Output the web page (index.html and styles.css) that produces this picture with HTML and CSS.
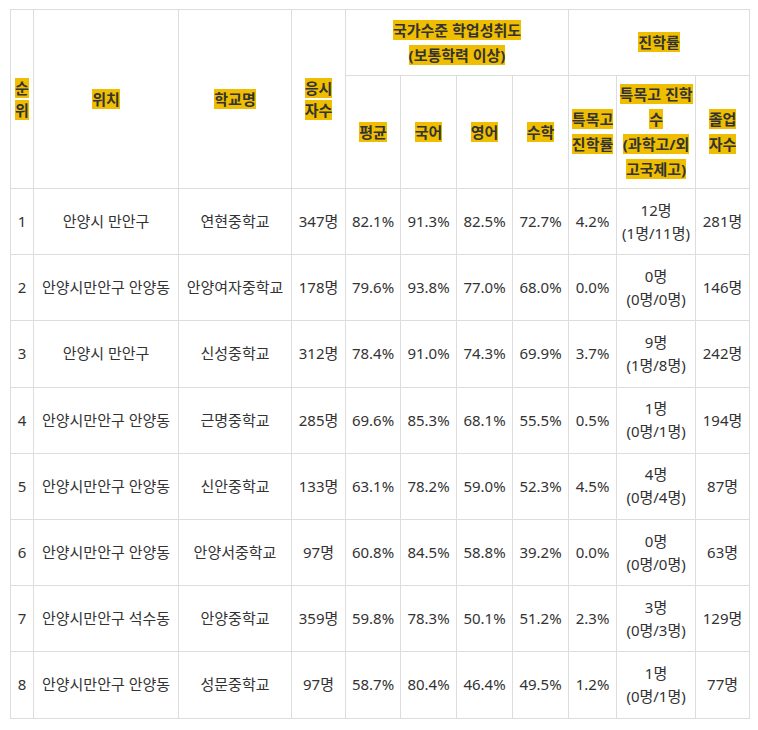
FILE: index.html
```html
<!DOCTYPE html>
<html lang="ko">
<head>
<meta charset="utf-8">
<link rel="stylesheet" href="styles.css">
</head>
<body>
<table class="rank">
  <colgroup>
    <col class="c-rank"><col class="c-loc"><col class="c-school"><col class="c-num">
    <col class="c-pct"><col class="c-pct2"><col class="c-pct2"><col class="c-pct2">
    <col class="c-rate"><col class="c-count"><col class="c-grad">
  </colgroup>
  <thead>
    <tr class="h1">
      <th rowspan="2" class="compact"><span class="hl">순</span><br><span class="hl">위</span></th>
      <th rowspan="2"><span class="hl">위치</span></th>
      <th rowspan="2"><span class="hl">학교명</span></th>
      <th rowspan="2" class="compact"><span class="hl">응시</span><br><span class="hl">자수</span></th>
      <th colspan="4"><span class="hl">국가수준 학업성취도</span><br><span class="hl">(보통학력 이상)</span></th>
      <th colspan="3"><span class="hl">진학률</span></th>
    </tr>
    <tr class="h2">
      <th><span class="hl">평균</span></th>
      <th><span class="hl">국어</span></th>
      <th><span class="hl">영어</span></th>
      <th><span class="hl">수학</span></th>
      <th class="tight"><span class="hl">특목고</span><br><span class="hl">진학률</span></th>
      <th><span class="hl">특목고 진학</span><br><span class="hl">수</span><br><span class="hl">(과학고/외</span><br><span class="hl">고국제고)</span></th>
      <th><span class="hl">졸업</span><br><span class="hl">자수</span></th>
    </tr>
  </thead>
  <tbody>
    <tr><td>1</td><td>안양시 만안구</td><td>연현중학교</td><td>347명</td><td>82.1%</td><td>91.3%</td><td>82.5%</td><td>72.7%</td><td>4.2%</td><td>12명<br>(1명/11명)</td><td>281명</td></tr>
    <tr><td>2</td><td>안양시만안구 안양동</td><td>안양여자중학교</td><td>178명</td><td>79.6%</td><td>93.8%</td><td>77.0%</td><td>68.0%</td><td>0.0%</td><td>0명<br>(0명/0명)</td><td>146명</td></tr>
    <tr><td>3</td><td>안양시 만안구</td><td>신성중학교</td><td>312명</td><td>78.4%</td><td>91.0%</td><td>74.3%</td><td>69.9%</td><td>3.7%</td><td>9명<br>(1명/8명)</td><td>242명</td></tr>
    <tr><td>4</td><td>안양시만안구 안양동</td><td>근명중학교</td><td>285명</td><td>69.6%</td><td>85.3%</td><td>68.1%</td><td>55.5%</td><td>0.5%</td><td>1명<br>(0명/1명)</td><td>194명</td></tr>
    <tr><td>5</td><td>안양시만안구 안양동</td><td>신안중학교</td><td>133명</td><td>63.1%</td><td>78.2%</td><td>59.0%</td><td>52.3%</td><td>4.5%</td><td>4명<br>(0명/4명)</td><td>87명</td></tr>
    <tr><td>6</td><td>안양시만안구 안양동</td><td>안양서중학교</td><td>97명</td><td>60.8%</td><td>84.5%</td><td>58.8%</td><td>39.2%</td><td>0.0%</td><td>0명<br>(0명/0명)</td><td>63명</td></tr>
    <tr><td>7</td><td>안양시만안구 석수동</td><td>안양중학교</td><td>359명</td><td>59.8%</td><td>78.3%</td><td>50.1%</td><td>51.2%</td><td>2.3%</td><td>3명<br>(0명/3명)</td><td>129명</td></tr>
    <tr><td>8</td><td>안양시만안구 안양동</td><td>성문중학교</td><td>97명</td><td>58.7%</td><td>80.4%</td><td>46.4%</td><td>49.5%</td><td>1.2%</td><td>1명<br>(0명/1명)</td><td>77명</td></tr>
  </tbody>
</table>
</body>
</html>
```

FILE: styles.css
```css
html, body {
  margin: 0;
  padding: 0;
  background: #ffffff;
}
body {
  padding: 9px 0 0 10px;
  font-family: "Noto Sans", "Noto Sans CJK KR", sans-serif;
  font-size: 15px;
  color: #333333;
}
.rank {
  border-collapse: collapse;
  table-layout: fixed;
  width: 740px;
}
.c-rank { width: 23px; }
.c-loc { width: 145px; }
.c-school { width: 113px; }
.c-num { width: 54px; }
.c-pct { width: 55px; }
.c-pct2 { width: 56px; }
.c-rate { width: 48px; }
.c-count { width: 79px; }
.c-grad { width: 54px; }
.rank th, .rank td {
  border: 1px solid #dddddd;
  text-align: center;
  vertical-align: middle;
  padding: 0 2px;
  line-height: 23px;
}
.rank th {
  font-weight: bold;
  color: #333333;
  line-height: 25px;
}
.rank th.compact { line-height: 22px; }
.rank th.tight { padding: 0 1px; }
.hl {
  background: #f0be00;
}
.h1 { height: 66px; }
.h2 { height: 113px; }
.rank tbody tr { height: 66.2px; }
```
